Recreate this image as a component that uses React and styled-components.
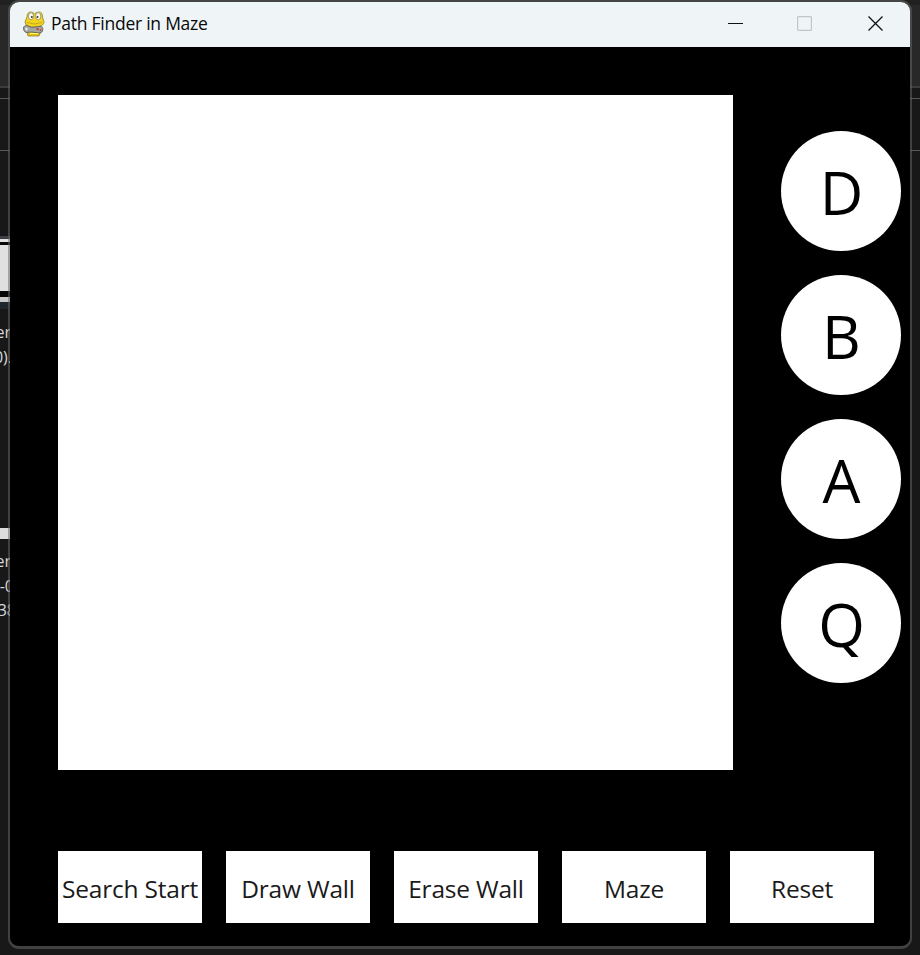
import React from 'react';
import styled, { createGlobalStyle } from 'styled-components';

const Global = createGlobalStyle`
  * { box-sizing: border-box; }
  body { margin: 0; background: #181818; overflow: hidden; }
`;

const Desktop = styled.div`
  display: grid;
  grid-template: 955px / 920px;
  overflow: hidden;
`;

const Backdrop = styled.div`
  grid-area: 1 / 1;
  display: flex;
  flex-direction: column;
  background: #181818;
`;

const Band = styled.div`
  height: ${(p) => p.$h}px;
  flex: none;
  width: ${(p) => (p.$left ? '10px' : 'auto')};
  background: ${(p) => p.$c || 'transparent'};
`;

const Snippet = styled.div`
  width: ${(p) => p.$end}px;
  height: 24.5px;
  flex: none;
  display: flex;
  justify-content: flex-end;
  white-space: nowrap;
  color: #d8d8d8;
  font: 16px/24px "Open Sans", sans-serif;
`;

const Window = styled.main`
  grid-area: 1 / 1;
  width: 904px;
  height: 949px;
  margin: 0 0 0 8px;
  display: flex;
  flex-direction: column;
  border: 2px solid rgba(104, 104, 104, 0.52);
  border-bottom-width: 3px;
  border-radius: 11px;
  background: #000;
  background-clip: padding-box;
  overflow: hidden;
  z-index: 1;
`;

const TitleBar = styled.header`
  height: 45px;
  flex: none;
  display: flex;
  align-items: center;
  padding: 0 27px 2px 12px;
  background: #eff4f7;
`;

const Title = styled.h1`
  margin: 0 0 0 5px;
  padding-bottom: 1px;
  flex: 1;
  color: #080808;
  font: 400 17.5px/24px "Open Sans", sans-serif;
  letter-spacing: -0.25px;
`;

const Controls = styled.div`
  display: grid;
  grid-template-columns: 69px 71px 15px;
`;

const Client = styled.section`
  flex: 1;
  padding: 48px 0 0 48px;
`;

const Workspace = styled.div`
  display: flex;
  gap: 48px;
`;

const Maze = styled.div`
  width: 675px;
  height: 675px;
  background: #fff;
`;

const Algorithms = styled.nav`
  display: flex;
  flex-direction: column;
  gap: 24px;
  padding-top: 36px;
`;

const RoundButton = styled.button`
  width: 120px;
  height: 120px;
  padding: 2px 0 0 1px;
  border: 0;
  border-radius: 50%;
  background: #fff;
  color: #000;
  font: 60px/82px "Open Sans", sans-serif;
`;

const Actions = styled.div`
  display: flex;
  gap: 24px;
  margin-top: 81px;
`;

const ActionButton = styled.button`
  width: 144px;
  height: 72px;
  padding: 3px 0 0;
  border: 0;
  background: #fff;
  color: #1a1a1a;
  font: 24.5px/33px "Open Sans", sans-serif;
  letter-spacing: -0.2px;
  white-space: nowrap;
`;

const SnakeIcon = () => (
  <svg width="24" height="26" viewBox="0 0 24 26">
    <path d="M5 20l1 5h11l2-5z" fill="#e5c51c" stroke="#80701d" strokeWidth=".7" />
    <path d="M5 6Q5 1 9 1q2 0 3.500 2Q14 1 17 1q3.500 0 3.500 5 .5 2 1.500 4.500 0 4-5 5-5 1.500-10 0-4-1-4-4.500Q4 8 5 6z" fill="#f2d31e" stroke="#85731e" strokeWidth=".7" />
    <ellipse cx="9" cy="5.200" rx="2.600" ry="3.600" fill="#fafafa" stroke="#85804f" strokeWidth=".7" />
    <ellipse cx="16.200" cy="5.200" rx="2.600" ry="3.600" fill="#fafafa" stroke="#85804f" strokeWidth=".7" />
    <circle cx="9.800" cy="6" r="1" fill="#333" />
    <circle cx="15.500" cy="6" r="1" fill="#333" />
    <path d="M5 11.500q7 3 15 0" fill="none" stroke="#b99d1c" strokeWidth=".8" />
    <path d="M1.500 16q2-2.500 5-1l3 1.500 7-1q4-1 4.500 2 0 4-3 4.500l-9-1-5 .5q-3-1-2.500-5.500z" fill="#a3a8a3" stroke="#555b56" strokeWidth=".8" />
    <path d="M3 18h3m-1.500-1.500v3" stroke="#eee" strokeWidth="1" />
    <circle cx="15.500" cy="18" r="1.300" fill="#c7453f" />
    <circle cx="18.500" cy="19" r="1" fill="#c7453f" />
    <path d="M8 22.500h8" stroke="#fff07c" strokeWidth="1" />
  </svg>
);

const algorithms = ['D', 'B', 'A', 'Q'];
const actions = ['Search Start', 'Draw Wall', 'Erase Wall', 'Maze', 'Reset'];

export default function App() {
  return (
    <>
      <Global />
      <Desktop>
        <Backdrop>
          <Band $h={5} $c="#202020" />
          <Band $h={81} $c="#282828" />
          <Band $h={2} $c="#3b3b3b" />
          <Band $h={10} $c="#181818" />
          <Band $h={1} $c="#565656" />
          <Band $h={51} />
          <Band $h={1} $c="#565656" />
          <Band $h={85} />
          <Band $h={3} $c="#3c4044" $left />
          <Band $h={3} $c="#e0e0e0" $left />
          <Band $h={3} $c="#080808" $left />
          <Band $h={46} $c="#e0e0e0" $left />
          <Band $h={6} $c="#060606" $left />
          <Band $h={5} $c="#c8c8c8" $left />
          <Band $h={7} $c="#20272c" $left />
          <Band $h={11} />
          <Snippet $end={11}>er</Snippet>
          <Snippet $end={12}>0).</Snippet>
          <Band $h={159} />
          <Band $h={11} $c="#dcdcdc" $left />
          <Band $h={10} />
          <Snippet $end={11}>er</Snippet>
          <Snippet $end={14}>-0</Snippet>
          <Snippet $end={16}>38</Snippet>
        </Backdrop>
        <Window>
          <TitleBar>
            <SnakeIcon />
            <Title>Path Finder in Maze</Title>
            <Controls>
              <svg width="15" height="15"><path d="M0 7.500h15" stroke="#111" /></svg>
              <svg width="15" height="15"><rect x=".6" y=".6" width="13.800" height="13.800" rx="1" fill="none" stroke="#c0c5c8" strokeWidth="1.200" /></svg>
              <svg width="15" height="15"><path d="M.5.5l14 14m0-14l-14 14" stroke="#111" strokeWidth="1.300" /></svg>
            </Controls>
          </TitleBar>
          <Client>
            <Workspace>
              <Maze />
              <Algorithms>
                {algorithms.map((a) => <RoundButton key={a}>{a}</RoundButton>)}
              </Algorithms>
            </Workspace>
            <Actions>
              {actions.map((a) => <ActionButton key={a}>{a}</ActionButton>)}
            </Actions>
          </Client>
        </Window>
      </Desktop>
    </>
  );
}
